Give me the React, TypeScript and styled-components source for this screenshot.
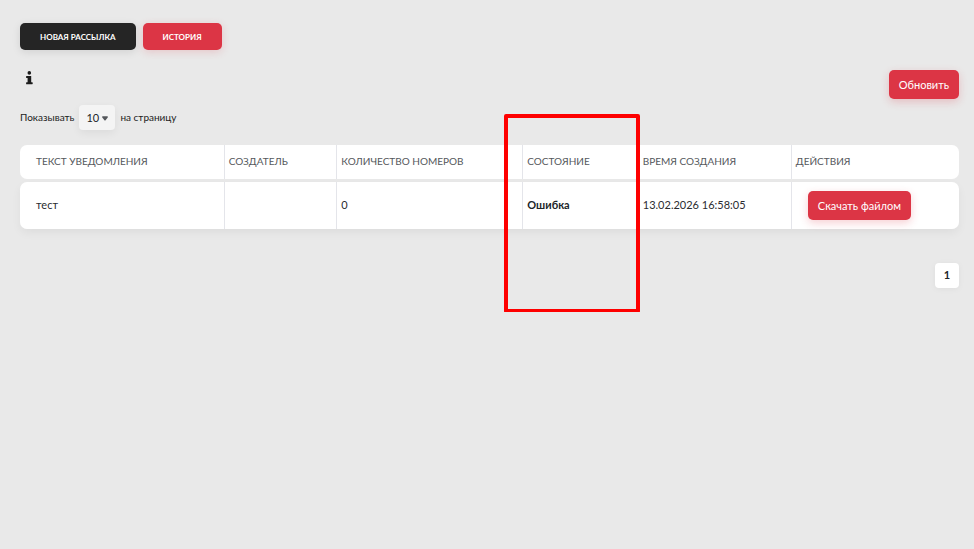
import React from "react";
import styled, { createGlobalStyle, css } from "styled-components";

const GlobalStyle = createGlobalStyle`
  *, *::before, *::after { box-sizing: border-box; }
  body {
    margin: 0;
    background: #e9e9e9;
    color: #212529;
    font-family: Lato, "Open Sans", sans-serif;
    font-size: 11px;
    line-height: 16px;
  }
  button, select { font-family: inherit; }
`;

const Page = styled.main`
  padding: 23px 15px 24px 20px;
`;

const Tabs = styled.nav`
  display: flex;
  gap: 7px;
`;

const TabButton = styled.button<{ $active?: boolean }>`
  height: 27px;
  padding: 0 20px;
  border: 0;
  border-radius: 5px;
  color: #fff;
  font-size: 8px;
  font-weight: 700;
  line-height: 16px;
  text-transform: uppercase;
  cursor: pointer;
  background: ${(p) => (p.$active ? "#dc3545" : "#252525")};
  box-shadow: 0 2px 8px
    ${(p) => (p.$active ? "rgba(220, 53, 69, 0.2)" : "rgba(0, 0, 0, 0.1)")};
`;

const Toolbar = styled.div`
  display: flex;
  justify-content: space-between;
  align-items: flex-start;
  margin-top: 20px;
`;

const InfoButton = styled.button`
  display: flex;
  margin: 1px 0 0 6px;
  padding: 0;
  border: 0;
  background: none;
  color: #1c1c1c;
  cursor: pointer;
`;

const ActionButton = styled.button`
  height: 29px;
  padding: 0 10px;
  border: 0;
  border-radius: 5px;
  background: #dc3545;
  color: #fff;
  font-size: 11px;
  line-height: 16px;
  white-space: nowrap;
  cursor: pointer;
  box-shadow: 0 3px 8px rgba(220, 53, 69, 0.24);
`;

const PageSize = styled.label`
  display: flex;
  align-items: center;
  gap: 5px;
  margin-top: 6px;
  font-size: 10px;
  color: #1c1c1c;
`;

const LabelText = styled.span`
  padding-bottom: 2px;
`;

const SelectBox = styled.span`
  position: relative;
  display: flex;
`;

const Select = styled.select`
  appearance: none;
  width: 36px;
  height: 25px;
  padding: 0 0 0 7px;
  border: 0;
  border-radius: 4px;
  background: #f4f4f4;
  color: #212529;
  font-size: 11px;
  box-shadow: 0 3px 8px rgba(0, 0, 0, 0.06);
`;

const Caret = styled.svg`
  position: absolute;
  right: 7px;
  top: 11px;
  pointer-events: none;
`;

const Table = styled.table`
  width: 100%;
  margin-top: 12px;
  table-layout: fixed;
  border-collapse: separate;
  border-spacing: 0 3px;
`;

const Col = styled.col<{ $share: number }>`
  width: ${(p) => p.$share}%;
`;

const cell = css`
  padding: 0 4px 2px;
  background: #fff;
  text-align: left;
  &:not(:last-child) { border-right: 1px solid #e4e5ea; }
  &:first-child {
    padding-left: 16px;
    border-radius: 7px 0 0 7px;
  }
  &:last-child { border-radius: 0 7px 7px 0; }
`;

const HeadCell = styled.th`
  ${cell}
  position: relative;
  height: 34px;
  color: #55585c;
  font-size: 10px;
  font-weight: 400;
  text-transform: uppercase;
  white-space: nowrap;
`;

const BodyRow = styled.tr`
  border-radius: 7px;
  box-shadow: 0 4px 10px rgba(0, 0, 0, 0.05);
`;

const Cell = styled.td<{ $strong?: boolean }>`
  ${cell}
  height: 47px;
  color: ${(p) => (p.$strong ? "#212529" : "#2a2c30")};
  font-size: 11px;
  font-weight: ${(p) => (p.$strong ? 700 : 400)};
`;

const ActionCell = styled(Cell)`
  padding: 0 16px;
`;

const Highlight = styled.span`
  position: absolute;
  z-index: 1;
  top: -31px;
  left: -19px;
  right: -2px;
  height: 199px;
  border: 4px solid #fe0000;
  border-radius: 2px;
  pointer-events: none;
`;

const Pagination = styled.nav`
  display: flex;
  justify-content: flex-end;
  margin-top: 31px;
`;

const PageButton = styled.button`
  width: 24px;
  height: 25px;
  padding: 0 0 3px;
  border: 0;
  border-radius: 4px;
  background: #fff;
  color: #212529;
  font-size: 11px;
  font-weight: 700;
  cursor: pointer;
  box-shadow: 0 1px 6px rgba(0, 0, 0, 0.05);
`;

const columns = [
  { title: "Текст уведомления", share: 21.8 },
  { title: "Создатель", share: 12 },
  { title: "Количество номеров", share: 19.8 },
  { title: "Состояние", share: 12.3, highlighted: true },
  { title: "Время создания", share: 16.3 },
  { title: "Действия", share: 17.8 },
];

const rows = [
  { text: "тест", author: "", count: 0, status: "Ошибка", created: "13.02.2026 16:58:05" },
];

export default function App() {
  return (
    <>
      <GlobalStyle />
      <Page>
        <Tabs>
          <TabButton type="button">Новая рассылка</TabButton>
          <TabButton type="button" $active>История</TabButton>
        </Tabs>
        <Toolbar>
          <InfoButton type="button" aria-label="Информация">
            <svg width="7" height="14" viewBox="0 0 7 14" fill="currentColor" aria-hidden="true">
              <circle cx="3.3" cy="1.9" r="1.8" />
              <path d="M.5 5h4.700v6.200h1c.3 0 .5.2.5.5v1c0 .3-.2.5-.5.5H.6a.5.5 0 0 1-.5-.5v-1c0-.3.2-.5.5-.5h1V7H.6a.5.5 0 0 1-.5-.5v-1C.1 5.200.3 5 .5 5Z" />
            </svg>
          </InfoButton>
          <ActionButton type="button">Обновить</ActionButton>
        </Toolbar>
        <PageSize>
          <LabelText>Показывать</LabelText>
          <SelectBox>
            <Select defaultValue="10">
              <option>10</option>
              <option>25</option>
              <option>50</option>
            </Select>
            <Caret width="6" height="5" viewBox="0 0 6 5" fill="#55585c" aria-hidden="true">
              <path d="M.8.3h4.400c.7 0 1 .8.5 1.300L3.600 4.200a.8.8 0 0 1-1.200 0L.3 1.600C-.2 1.100.1.3.8.3Z" />
            </Caret>
          </SelectBox>
          <LabelText>на страницу</LabelText>
        </PageSize>
        <Table>
          <colgroup>
            {columns.map((c) => <Col key={c.title} $share={c.share} />)}
          </colgroup>
          <thead>
            <tr>
              {columns.map((c) => (
                <HeadCell key={c.title} scope="col">
                  {c.title}
                  {c.highlighted && <Highlight />}
                </HeadCell>
              ))}
            </tr>
          </thead>
          <tbody>
            {rows.map((r) => (
              <BodyRow key={r.created}>
                <Cell>{r.text}</Cell>
                <Cell>{r.author}</Cell>
                <Cell>{r.count}</Cell>
                <Cell $strong>{r.status}</Cell>
                <Cell>{r.created}</Cell>
                <ActionCell>
                  <ActionButton type="button">Скачать файлом</ActionButton>
                </ActionCell>
              </BodyRow>
            ))}
          </tbody>
        </Table>
        <Pagination aria-label="Страницы">
          <PageButton type="button" aria-current="page">1</PageButton>
        </Pagination>
      </Page>
    </>
  );
}
